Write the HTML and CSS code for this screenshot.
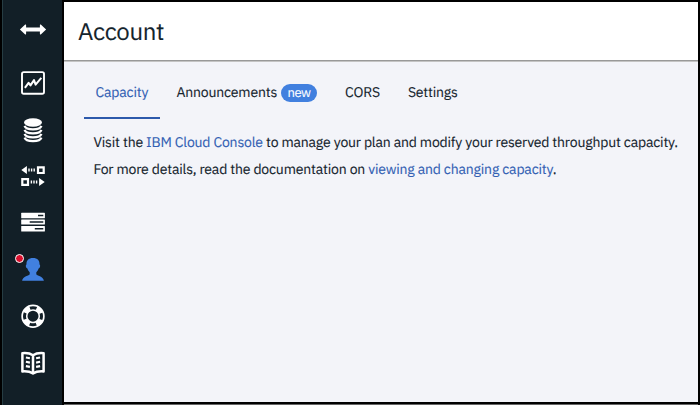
FILE: index.html
```html
<!DOCTYPE html>
<html lang="en">
<head>
<meta charset="utf-8">
<title>Account</title>
<link rel="stylesheet" href="styles.css">
</head>
<body>
<div class="app">
  <nav class="sidebar">
    <a class="nav-item nav-toggle"><svg width="28" height="28" viewBox="0 0 28 28"><path fill="#fff" d="M.9 14.500 6.200 9.600q.9-.5.9.6v2.300h13.800v-2.300q0-1.100.9-.6l5.300 4.900-5.300 4.900q-.9.500-.9-.6v-2.300H7.100v2.300q0 1.100-.9.600z"/></svg></a>
    <a class="nav-item"><svg width="28" height="28" viewBox="0 0 28 28"><rect x="3" y="3.100" width="22" height="21.600" rx="1.800" fill="none" stroke="#fff" stroke-width="1.900"/><path fill="none" stroke="#fff" stroke-width="2" stroke-linejoin="round" d="m5.900 18.800 3.700-5 1.900 2.600 3.500-5.300 1.600 4.500 5.700-6.700"/></svg></a>
    <a class="nav-item"><svg width="28" height="28" viewBox="0 0 28 28"><ellipse cx="14" cy="6.500" rx="9" ry="4.200" fill="#fff"/><g fill="none" stroke="#fff" stroke-width="2.300"><path d="M5.600 9.900c1.400 4.600 15.400 4.600 16.800 0M5.600 13.900c1.400 4.600 15.400 4.600 16.800 0M5.600 17.900c1.400 4.600 15.400 4.600 16.800 0M5.600 21.700c1.400 4.600 15.400 4.600 16.800 0"/></g></svg></a>
    <a class="nav-item"><svg width="28" height="28" viewBox="0 0 28 28"><g fill="#fff"><path d="m2.300 8 5.600-4v8zM25.700 20l-5.600-4v8z"/><path d="M9.300 6.400h1.400v3.200H9.300zm2.600 0h1.400v3.200h-1.400zm2.600 0h1.400v3.200h-1.400zM11.700 18.400h1.400v3.200h-1.400zm2.600 0h1.400v3.200h-1.400zm2.600 0h1.400v3.200h-1.400z"/></g><path fill="none" stroke="#fff" stroke-width="2.200" d="M19 5.300h5.700v5.700H19zM3.300 17.200H9v5.700H3.300z"/></svg></a>
    <a class="nav-item nav-servers"><svg width="28" height="28" viewBox="0 0 28 28"><g fill="#fff"><rect x="2.200" y="4.800" width="23.700" height="5.400" rx=".5"/><rect x="2.200" y="11.400" width="23.700" height="5.200" rx=".5"/><rect x="2.200" y="17.900" width="23.700" height="5.700" rx=".5"/></g><path stroke="#121f27" stroke-width="1.500" d="M19 7.500h5.300M10.700 14h13.600M15.800 20.700h8.500"/></svg></a>
    <a class="nav-item nav-user"><svg width="28" height="28" viewBox="0 0 28 28"><path fill="#4180df" d="M14 3c-4.500 0-6.800 2.600-6.500 6.500-1 .2-.9 3.300.7 3.700.6 1.700 1.400 3 2.500 4v2.100c-.3 1.700-7 1.800-7.600 6.400h21.800c-.6-4.600-7.300-4.700-7.600-6.400v-2.100c1.100-1 1.900-2.300 2.500-4 1.600-.4 1.700-3.500.7-3.700C20.800 5.600 18.500 3 14 3z"/></svg><i class="alert-dot"></i></a>
    <a class="nav-item"><svg width="28" height="28" viewBox="0 0 28 28"><circle cx="14" cy="14.200" r="8.600" fill="none" stroke="#fff" stroke-width="6.200"/><circle cx="14" cy="14.200" r="8.500" fill="none" stroke="#121f27" stroke-width="3" stroke-dasharray="6.676 6.676" stroke-dashoffset="3.338"/></svg></a>
    <a class="nav-item"><svg width="28" height="28" viewBox="0 0 28 28"><path fill="none" stroke="#fff" stroke-width="2.500" stroke-linejoin="round" d="M14 6.300C11.200 4.400 7.500 3.800 3.400 4.200v18.200c4.300-.3 7.800.2 10.600 2 2.800-1.800 6.300-2.300 10.600-2V4.200C20.500 3.800 16.800 4.400 14 6.300zm0 0v18"/><path fill="none" stroke="#fff" stroke-width="2.100" d="m6.900 8.500 4 .8m-4 3.500 4 .8m-4 3.500 4 .8M21.100 8.500l-4 .8m4 3.500-4 .8m4 3.500-4 .8"/></svg></a>
  </nav>
  <main class="main">
    <header class="header"><h1 class="title">Account</h1></header>
    <div class="tabs">
      <a class="tab tab-active">Capacity</a>
      <a class="tab">Announcements<b class="badge">new</b></a>
      <a class="tab">CORS</a>
      <a class="tab">Settings</a>
    </div>
    <section class="content">
      <p>Visit the <a class="link">IBM Cloud Console</a> to manage your plan and modify your reserved throughput capacity.</p>
      <p>For more details, read the documentation on <a class="link">viewing and changing capacity</a>.</p>
    </section>
  </main>
</div>
</body>
</html>
```
FILE: styles.css
```css
* { box-sizing: border-box; }
body { margin: 0; background: #000; color: #13232c; font: 14px/20px "IBM Plex Sans", Roboto, "Liberation Sans", sans-serif; letter-spacing: -.176px; text-rendering: geometricPrecision; -webkit-text-stroke: .12px currentColor; }
h1, p { margin: 0; font-weight: 400; }
.app { display: flex; width: 700px; height: 405px; padding: 0 2px; overflow: hidden; background: #000; }
.sidebar { display: flex; flex-direction: column; flex: none; width: 60px; height: 405px; padding: 15px 0 0 1px; background: #121f27; border-left: 1px solid #263d43; }
.nav-item { position: relative; display: flex; flex: none; justify-content: center; height: 46.7px; }
.nav-toggle { height: 54px; }
.nav-servers { height: 47px; margin-top: -.6px; }
.nav-user { height: 46.9px; }
.alert-dot { position: absolute; left: 11px; top: -1.5px; width: 9px; height: 9px; border: 1px solid #fff; border-radius: 50%; background: #db0f2d; }
.main { width: 634px; height: 400px; margin: 2px 0 0 2px; background: #f3f4f9; box-shadow: 0 2px #000, 0 3px #666; }
.header { height: 60px; padding: 14px 0 0 14px; background: #fff; border-bottom: 1px solid #c4c4c4; box-shadow: inset 0 -1px #999; }
.title { font-size: 24px; line-height: 30px; letter-spacing: -.32px; }
.tabs { display: flex; height: 57px; padding-left: 20px; }
.tab { display: flex; height: 57px; padding: 20.4px 11.5px 0; margin-right: 5px; white-space: nowrap; }
.tab-active { width: 76px; color: #325fb3; border-bottom: 2px solid #2c59ab; }
.badge { width: 36px; height: 18px; margin: 1.4px 0 0 4px; border-radius: 9px; background: #4180df; color: #fff; text-align: center; font-size: 13px; font-weight: 400; line-height: 17px; letter-spacing: -.5px; }
.content { padding: 10px 0 0 29.4px; white-space: nowrap; }
.content p { height: 27px; line-height: 27px; }
.link { color: #325fb3; }
```
